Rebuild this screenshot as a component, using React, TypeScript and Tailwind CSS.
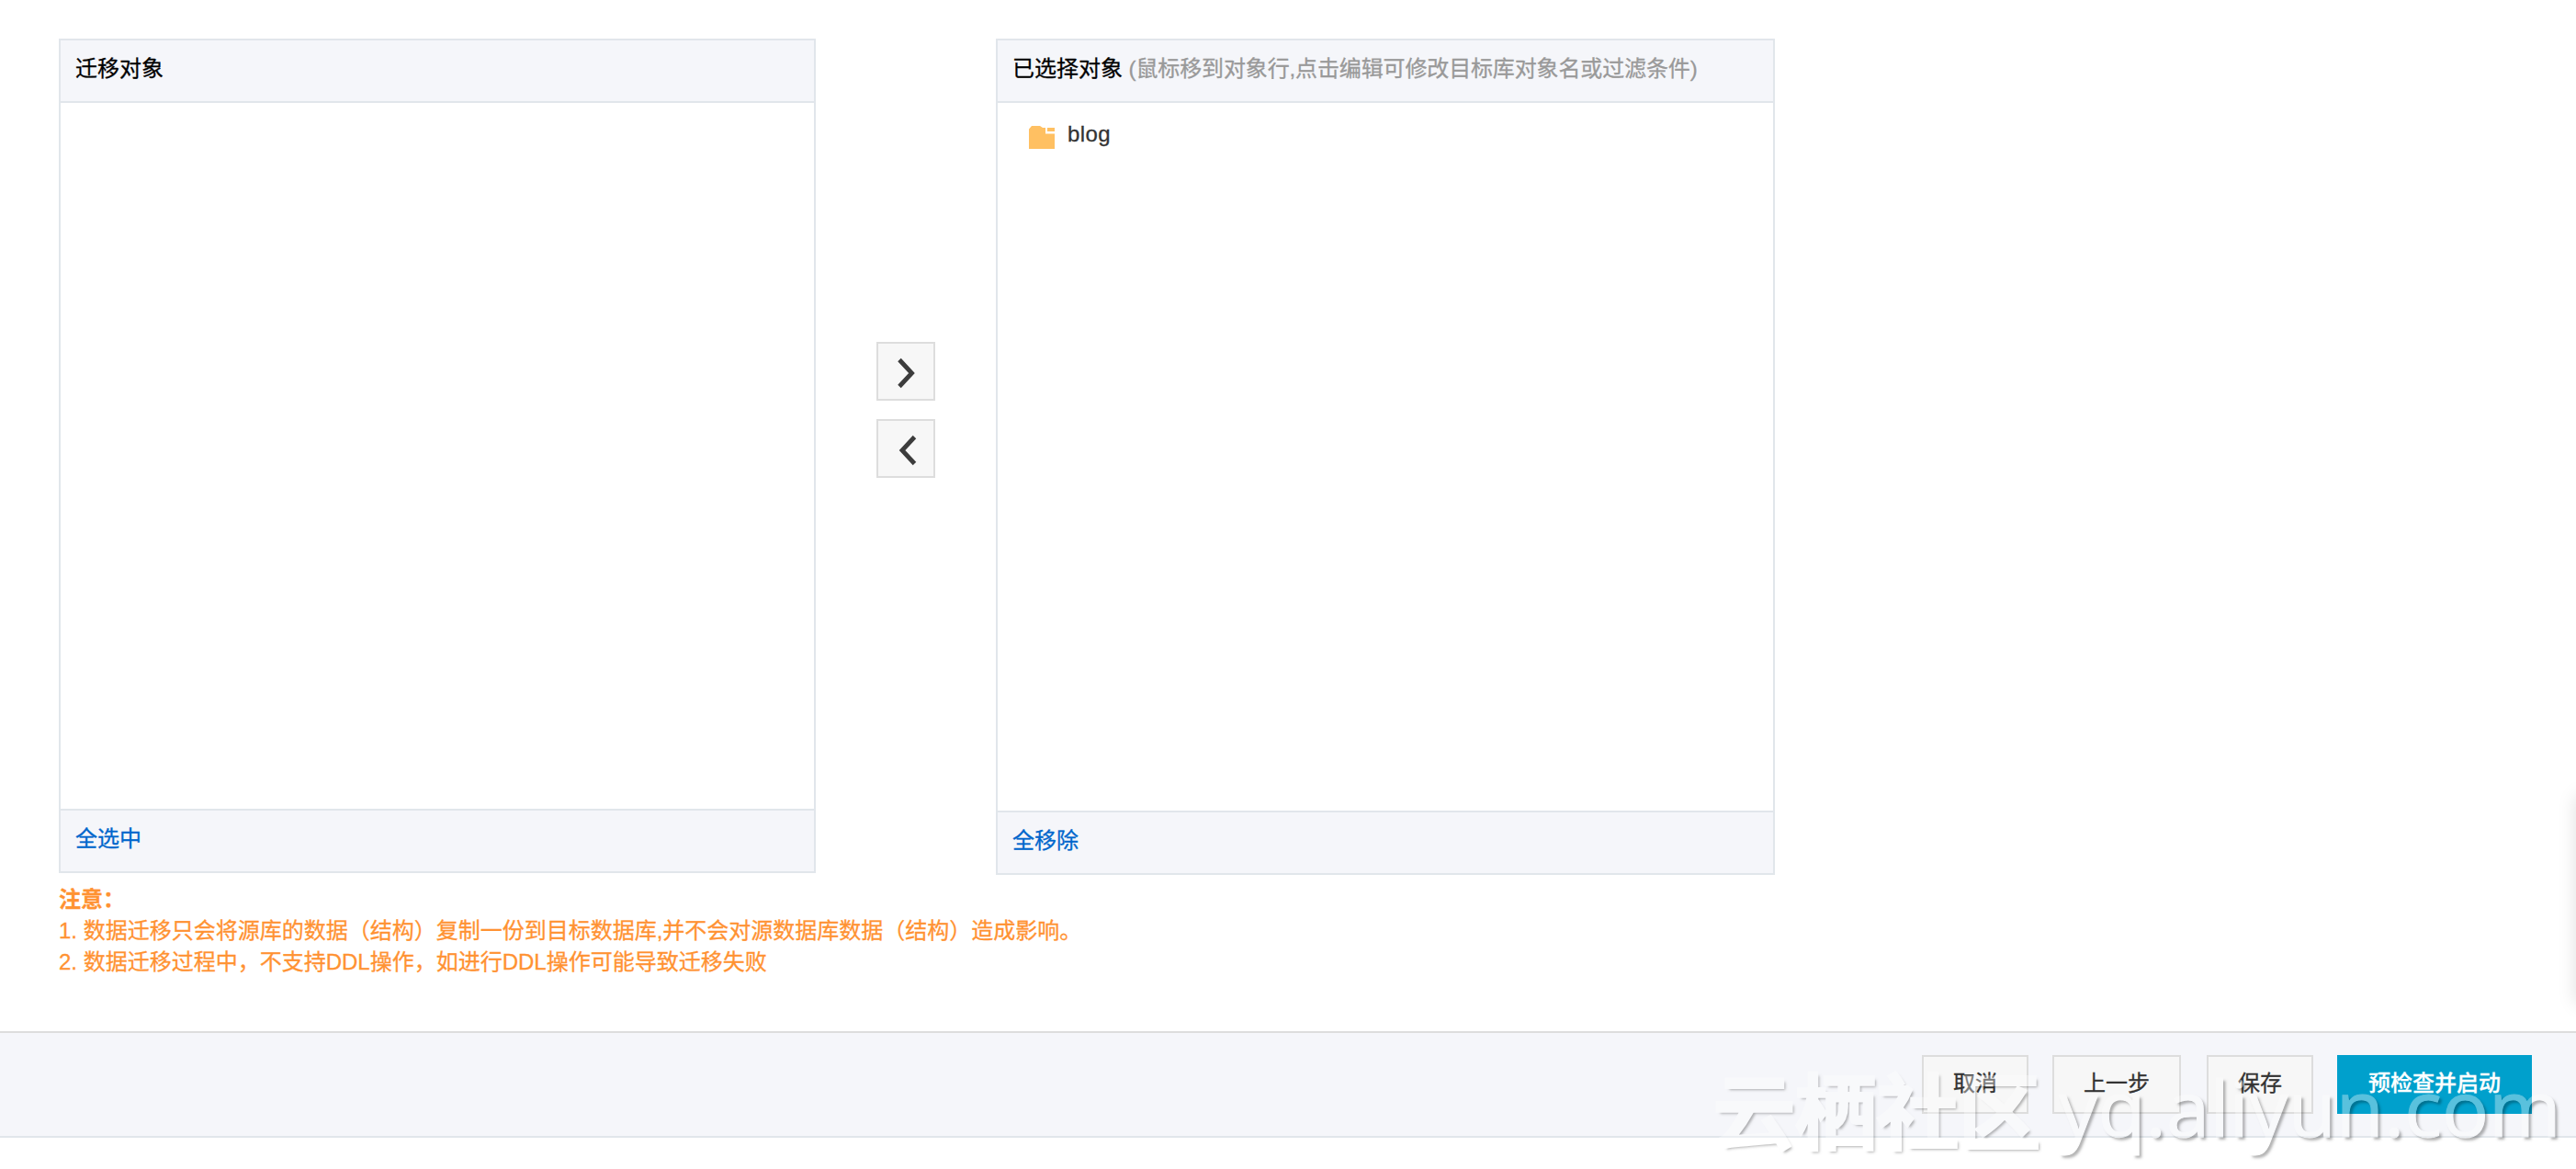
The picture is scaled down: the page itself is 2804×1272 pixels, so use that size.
import type { ReactNode } from "react";

function Panel({ title, hint, action, className, children }: { title: string; hint?: string; action: string; className: string; children?: ReactNode }) {
  return (
    <section className={`flex flex-col border-2 border-[#e1e6eb] bg-white ${className}`}>
      <header className="h-[68px] shrink-0 border-b-2 border-[#e1e6eb] bg-[#f5f6fa] pl-4 leading-[62px] text-black">
        {title}
        {hint && <span className="tracking-[-0.13px] text-[#999999]"> {hint}</span>}
      </header>
      <div className="flex-1">{children}</div>
      <footer className="h-[68px] shrink-0 border-t-2 border-[#e1e6eb] bg-[#f5f6fa] pl-4 leading-[62px]">
        <a className="text-[#0066cc]">{action}</a>
      </footer>
    </section>
  );
}

function ArrowButton({ d }: { d: string }) {
  return (
    <button className="h-16 w-16 border-2 border-[#dddddd] bg-[#f7f7f7]">
      <svg viewBox="0 0 60 60" className="block h-[60px] w-[60px]" fill="none" stroke="#3c3c3c" strokeWidth="4.8">
        <path d={d} />
      </svg>
    </button>
  );
}

function FolderIcon() {
  return (
    <svg viewBox="0 0 28 25" className="mt-[4px] h-[25px] w-7" fill="#ffc062">
      <path d="M0 3.5 L3 0 H12 L15 2 H18 V8.5 H28 V25 H0 Z" />
      <rect x="20" y="2" width="8" height="4" />
    </svg>
  );
}

function BarButton({ label, className }: { label: string; className: string }) {
  return (
    <button className={`flex h-16 justify-center border-2 border-[#dddddd] bg-[#f7f7f7] leading-[58px] text-[#333333] ${className}`}>{label}</button>
  );
}

export default function App() {
  return (
    <div className="relative flex h-[1272px] w-[2804px] flex-col overflow-hidden bg-white font-['Liberation_Sans','Noto_Sans_CJK_SC',sans-serif] text-[24px] [-webkit-text-stroke:0.3px_currentColor]">
      <main className="h-[1122px] shrink-0 pl-16 pt-[42px]">
        <div className="flex h-[910px] items-start">
          <Panel title="迁移对象" action="全选中" className="h-[908px] w-[824px]" />
          <div className="ml-[66px] mr-[66px] mt-[330px] flex flex-col gap-5">
            <ArrowButton d="M23 17.5 L36.5 32 L23 46.5" />
            <ArrowButton d="M39.5 17.5 L26 32 L39.5 46.5" />
          </div>
          <Panel
            title="已选择对象"
            hint="(鼠标移到对象行,点击编辑可修改目标库对象名或过滤条件)"
            action="全移除"
            className="h-[910px] w-[848px]"
          >
            <div className="flex items-start gap-[14px] pl-[34px] pt-[21px] leading-[26px] text-[#333333]">
              <FolderIcon />
              <span className="tracking-[0.4px]">blog</span>
            </div>
          </Panel>
        </div>
        <div className="pt-[10px] leading-[34px] text-[#ff9232]">
          <p className="font-bold">注意：</p>
          <p>1. 数据迁移只会将源库的数据（结构）复制一份到目标数据库,并不会对源数据库数据（结构）造成影响。</p>
          <p>2. 数据迁移过程中，不支持DDL操作，如进行DDL操作可能导致迁移失败</p>
        </div>
      </main>
      <div className="flex h-[116px] shrink-0 justify-end border-b-2 border-t-2 border-b-[#e1e6eb] border-t-[#dddddd] bg-[#f5f6fa] pr-12 pt-6">
        <BarButton label="取消" className="mr-[26px] w-[116px]" />
        <BarButton label="上一步" className="mr-7 w-[140px]" />
        <BarButton label="保存" className="mr-[26px] w-[116px]" />
        <button className="flex h-16 w-[212px] justify-center bg-[#00a0cc] font-medium leading-[62px] text-white">预检查并启动</button>
      </div>
      <div className="absolute -right-10 top-[866px] h-[226px] w-10 shadow-[0_0_20px_rgba(0,0,0,0.13)]" />
      <div className="pointer-events-none absolute left-[1865px] top-[1141px] flex items-start whitespace-nowrap text-white opacity-35 [text-shadow:3px_3px_3px_rgba(0,0,0,0.85)]">
        <span className="font-['Noto_Sans_CJK_SC',sans-serif] text-[89px] font-medium leading-[128px] [-webkit-text-stroke:4px_white]">云栖社区</span>
        <span className="ml-[20px] pt-[5px] font-['Open_Sans',sans-serif] text-[85px] leading-[116px] [-webkit-text-stroke:1px_white]">yq.aliyun.com</span>
      </div>
    </div>
  );
}
